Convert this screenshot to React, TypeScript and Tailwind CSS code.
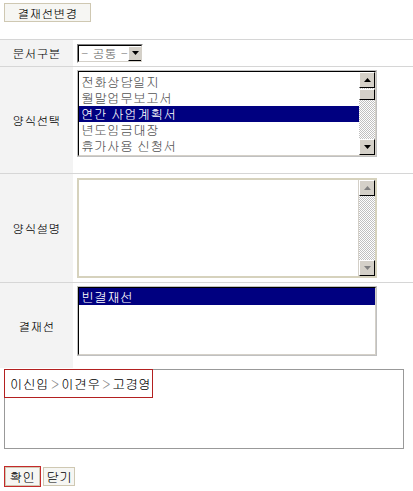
import React from "react";

const Arrow = ({ dir, muted }: { dir: "up" | "down"; muted?: boolean }) => (
  <svg width="7" height="4" viewBox="0 0 7 4">
    <path
      fill={muted ? "#808080" : "#000"}
      d={dir === "up" ? "M3.5 0 7 4H0z" : "M0 0h7L3.5 4z"}
    />
  </svg>
);

/* classic windows 3d button for scrollbars */
function SbButton({ dir, muted }: { dir: "up" | "down"; muted?: boolean }) {
  return (
    <div className="w-[16px] h-[16px] bg-[#d4d0c8] border border-t-white border-l-white border-r-black border-b-black flex items-center justify-center shrink-0">
      <Arrow dir={dir} muted={muted} />
    </div>
  );
}

function Scrollbar({ thumb, muted }: { thumb?: boolean; muted?: boolean }) {
  return (
    <div className="w-[16px] h-full flex flex-col bg-[repeating-conic-gradient(#c0c0c0_0_25%,#ffffff_0_50%)] bg-[length:2px_2px]">
      <SbButton dir="up" muted={muted} />
      {thumb && (
        <div className="mt-[1px] w-[16px] h-[11px] bg-[#d4d0c8] border border-t-white border-l-white border-r-black border-b-black" />
      )}
      <div className="flex-1" />
      <SbButton dir="down" muted={muted} />
    </div>
  );
}

const forms = ["전화상담일지", "월말업무보고서", "연간 사업계획서", "년도임금대장", "휴가사용 신청서"];

function Row({
  label,
  className,
  children,
}: {
  label: string;
  className: string;
  children: React.ReactNode;
}) {
  return (
    <div className={"flex border-t border-[#d6d6d6] " + className}>
      <div className="w-[73px] shrink-0 bg-[#f3f3f3] flex items-center justify-center text-[12px]">
        {label}
      </div>
      <div className="flex-1 pl-[4px]">{children}</div>
    </div>
  );
}

export default function App() {
  return (
    <div className="w-[413px] h-[491px] bg-white text-black font-['Gulim','Noto_Sans_CJK_KR',sans-serif] text-[12px] leading-none">
      <div className="pt-[3px] pl-[4px]">
        <button className="w-[87px] h-[19px] bg-[#f6f6f3] border border-[#cfc8b2] text-[12px] flex items-center justify-center">
          결재선변경
        </button>
      </div>

      <div className="mt-[17px]">
        <Row label="문서구분" className="h-[27px] items-stretch">
          <div className="h-full flex items-center">
            <div className="w-[66px] h-[19px] flex border border-[#808080] border-r-white border-b-white">
              <div className="flex-1 flex border border-black border-r-[#d4d0c8] border-b-[#d4d0c8] bg-white overflow-hidden">
                <span className="flex-1 flex items-center pl-[2px] text-[12px] text-[#666] whitespace-nowrap">- 공통 -</span>
                <div className="w-[15px] h-full shrink-0 bg-[#d4d0c8] border border-t-white border-l-white border-r-black border-b-black flex items-center justify-center">
                  <Arrow dir="down" />
                </div>
              </div>
            </div>
          </div>
        </Row>

        <Row label="양식선택" className="h-[107px]">
          <div className="mt-[3px] w-[300px] h-[87px] border border-[#c0c0c0]">
            <div className="h-full flex border border-t-black border-l-black border-r-[#d4d0c8] border-b-[#d4d0c8] bg-white">
              <div className="flex-1 pt-[2px] text-[13px] leading-[16px] text-[#555]">
                {forms.map((f, i) => (
                  <div
                    key={f}
                    className={
                      "h-[16px] pl-[2px] whitespace-nowrap " +
                      (i === 2 ? "bg-[#000080] text-white" : "")
                    }
                  >
                    {f}
                  </div>
                ))}
              </div>
              <Scrollbar thumb />
            </div>
          </div>
        </Row>

        <Row label="양식설명" className="h-[109px]">
          <div className="mt-[4px] w-[300px] h-[100px] border-2 border-[#d6d2bd] bg-white flex justify-end">
            <div className="border-l border-[#d4d0c8] h-full">
              <Scrollbar muted />
            </div>
          </div>
        </Row>

        <Row label="결재선" className="h-[86px]">
          <div className="mt-[3px] w-[300px] h-[70px] border border-[#c0c0c0]">
            <div className="h-full border border-t-black border-l-black border-r-[#d4d0c8] border-b-[#d4d0c8] bg-white text-[13px]">
              <div className="h-[17px] pl-[2px] flex items-center bg-[#000080] text-white">빈결재선</div>
            </div>
          </div>
        </Row>
      </div>

      <div className="relative ml-[4px] mt-[1px] w-[400px] h-[80px] border border-[#999]">
        <div className="absolute left-[-1px] top-[-1px] w-[149px] h-[29px] border border-[#b32020] flex items-center pl-[5px] text-[13px] whitespace-nowrap">
          이신입<span className="text-[#888] px-[2px]">&gt;</span>이견우
          <span className="text-[#888] px-[2px]">&gt;</span>고경영
        </div>
      </div>

      <div className="mt-[17px] ml-[4px] flex items-start gap-[2px]">
        <div className="w-[37px] h-[21px] border border-[#c42a2a]">
          <button className="w-full h-full bg-[#f6f6f3] border border-[#cfc8b2] text-[13px] flex items-center justify-center">
            확인
          </button>
        </div>
        <button className="mt-[1px] w-[32px] h-[19px] bg-[#f6f6f3] border border-[#cfc8b2] text-[13px] flex items-center justify-center">
          닫기
        </button>
      </div>
    </div>
  );
}
